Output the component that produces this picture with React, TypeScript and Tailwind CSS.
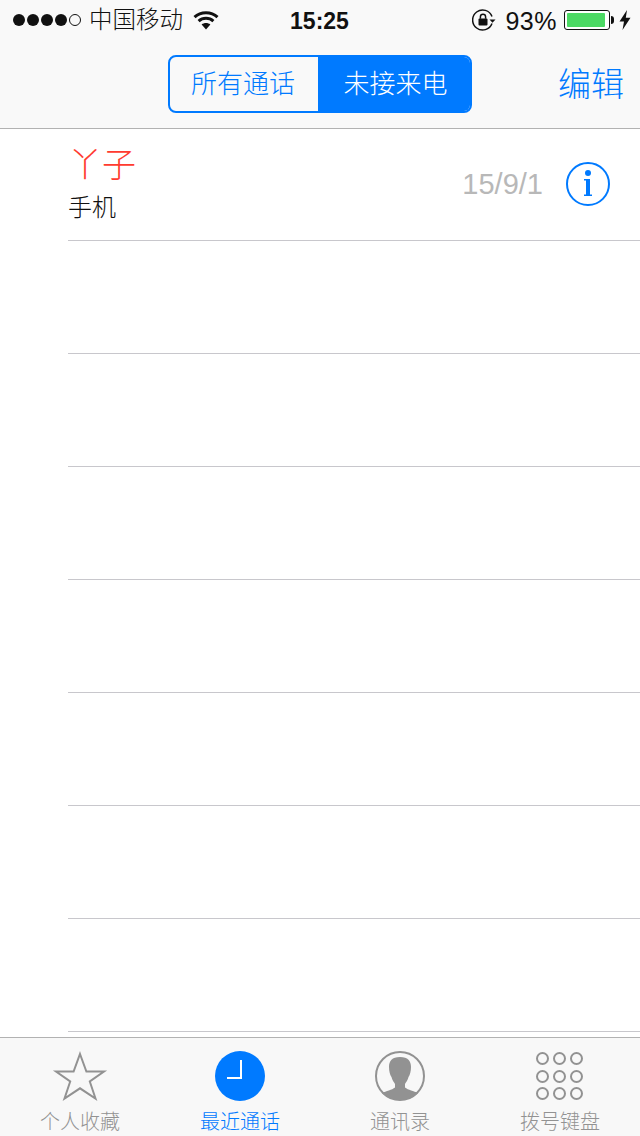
const cjk = "font-['Liberation_Sans','Noto_Sans_CJK_SC',sans-serif]"

const Wifi = () => (
    <svg width="26" height="20" viewBox="0 0 26 20" fill="none" stroke="#111" strokeWidth="3">
        <path d="M1.5 7.2C7.800 1.400 18.200 1.400 24.500 7.200" />
        <path d="M5.600 11.200C9.800 7.400 16.200 7.400 20.400 11.200" />
        <path d="M13 19.500L8.600 14.600C11.200 12.600 14.800 12.600 17.400 14.600Z" fill="#111" stroke="none" />
    </svg>
)

const RotationLock = () => (
    <svg width="24" height="22" viewBox="0 0 24 22" fill="none">
        <path d="M20 14.500A10 10 0 1 1 20 7.500" stroke="#111" strokeWidth="1.500" />
        <path d="M17.500 10.500h6l-3 3.200z" fill="#111" />
        <rect x="6.500" y="9.500" width="9" height="7" rx="1" fill="#111" />
        <path d="M8.400 9.800V7.800a2.600 2.600 0 0 1 5.200 0v2" stroke="#111" strokeWidth="1.500" />
    </svg>
)

const Battery = () => (
    <div className="flex items-center">
        <div className="w-[46px] h-[20px] rounded-[3px] border border-[#111] p-[2px] bg-white">
            <div className="h-full w-[38px] rounded-[1px] bg-[#4cd964]" />
        </div>
        <div className="w-[3px] h-[8px] ml-[1px] rounded-r-full bg-[#111]" />
    </div>
)

const Bolt = () => (
    <svg width="12" height="20" viewBox="0 0 12 20">
        <path d="M8 0L0.500 11.500H5L3.500 20L11.500 7.800H6.800Z" fill="#111" />
    </svg>
)

const StatusBar = () => (
    <div className={`${cjk} grid grid-cols-[1fr_auto_1fr] items-center h-[40px] text-[#111]`}>
        <div className="flex items-center pl-[13px]">
            <div className="flex gap-[2px]">
                <span className="w-3 h-3 rounded-full bg-[#111]" />
                <span className="w-3 h-3 rounded-full bg-[#111]" />
                <span className="w-3 h-3 rounded-full bg-[#111]" />
                <span className="w-3 h-3 rounded-full bg-[#111]" />
                <span className="w-3 h-3 rounded-full border border-[#111]" />
            </div>
            <span className="ml-[8px] mt-[2px] text-[23.5px] font-light leading-none">中国移动</span>
            <span className="ml-[10px]"><Wifi /></span>
        </div>
        <span className="-ml-px mt-[2px] text-[23px] font-bold leading-none">15:25</span>
        <div className="flex items-center justify-end pr-[9px]">
            <RotationLock />
            <span className="ml-[9px] mr-[7px] mt-[2px] text-[25px] tracking-[0.5px] leading-none">93%</span>
            <Battery />
            <span className="ml-[5px]"><Bolt /></span>
        </div>
    </div>
)

const NavBar = () => (
    <div className={`${cjk} grid grid-cols-[1fr_auto_1fr] items-start h-[89px] pt-[15px] border-b border-[#b2b2b2] font-light`}>
        <div />
        <div className="flex w-[304px] h-[58px] rounded-[8px] border-2 border-[#007aff] overflow-hidden text-[26px]">
            <span className="w-[148px] flex items-center justify-center pr-[2px] text-[#007aff]">所有通话</span>
            <span className="flex-1 flex items-center justify-center pl-[3px] text-white bg-[#007aff]">未接来电</span>
        </div>
        <span className="justify-self-end pr-[16px] mt-[13px] text-[33px] leading-none text-[#007aff]">编辑</span>
    </div>
)

const InfoIcon = () => (
    <svg className="-mt-px" width="44" height="44" viewBox="0 0 44 44" fill="#007aff">
        <circle cx="22" cy="22" r="21" fill="none" stroke="#007aff" strokeWidth="2" />
        <circle cx="22" cy="11" r="3" />
        <path d="M18 17H24V32.500H26V34H18V32.500H20V18.500H18Z" />
    </svg>
)

const CallRow = () => (
    <div className={`${cjk} flex items-center h-[112px] ml-[68px] pr-[30px] border-b border-[#c8c7cc]`}>
        <div className="flex flex-col flex-1 -mt-[2px]">
            <span className="text-[34px] leading-[40px] text-[#ff3b30] font-light">丫子</span>
            <span className="mt-[9px] text-[24px] leading-[28px] text-[#111] font-light">手机</span>
        </div>
        <span className="mr-[23px] text-[29px] text-[#b8b8b8]">15/9/1</span>
        <InfoIcon />
    </div>
)

const StarIcon = () => (
    <svg width="56" height="52" viewBox="0 0 56 52" fill="none" stroke="#929292" strokeWidth="2">
        <path d="M28 4L34.400 21.500H52L37.800 31.500L43.500 48.500L28 38.300L12.500 48.500L18.200 31.500L4 21.500H21.600Z" />
    </svg>
)

const ClockIcon = () => (
    <svg width="50" height="50" viewBox="0 0 50 50">
        <circle cx="25" cy="25" r="25" fill="#007aff" />
        <path d="M26 9V27H12" fill="none" stroke="#fff" strokeWidth="2" />
    </svg>
)

const PersonIcon = () => (
    <svg width="50" height="50" viewBox="0 0 50 50">
        <circle cx="25" cy="25" r="24" fill="none" stroke="#929292" strokeWidth="2" />
        <path
            d="M25 6C17 6 14 10 14 16C14 20 15 24 16.500 26C17 29 19 31 20 33V36.500C17 39 11 40 7 42C12 47 18 49 25 49C32 49 38 47 43 42C39 40 33 39 30 36.500V33C31 31 33 29 33.500 26C35 24 36 20 36 16C36 10 33 6 25 6Z"
            fill="#929292"
        />
    </svg>
)

const KeypadIcon = () => (
    <div className="grid grid-cols-3 gap-x-[4px] gap-y-[4.5px] -ml-px">
        {Array.from({ length: 9 }).map((_, i) => (
            <span key={i} className="w-[13px] h-[13px] rounded-full border-2 border-[#929292]" />
        ))}
    </div>
)

const TabItem = ({ icon, label, active }: { icon: React.ReactNode; label: string; active?: boolean }) => (
    <div className="flex flex-col items-center">
        <div className="flex items-center justify-center h-[52px]">{icon}</div>
        <span className={`mt-[8px] text-[20px] leading-[24px] font-light ${active ? "text-[#007aff]" : "text-[#929292]"}`}>
            {label}
        </span>
    </div>
)

const TabBar = () => (
    <div className={`${cjk} grid grid-cols-4 h-[99px] pt-[12px] bg-[#f8f8f8] border-t border-[#b2b2b2]`}>
        <TabItem icon={<StarIcon />} label="个人收藏" />
        <TabItem icon={<ClockIcon />} label="最近通话" active />
        <TabItem icon={<PersonIcon />} label="通讯录" />
        <TabItem icon={<KeypadIcon />} label="拨号键盘" />
    </div>
)

const EmptyRow = () => <div className="h-[113px] ml-[68px] border-b border-[#c8c7cc]" />

export default function App() {
    return (
        <div className="flex flex-col w-[640px] h-[1136px] overflow-hidden bg-white">
            <div className="bg-[#f9f9f9]">
                <StatusBar />
                <NavBar />
            </div>
            <main className="flex-1 overflow-hidden">
                <CallRow />
                <EmptyRow />
                <EmptyRow />
                <EmptyRow />
                <EmptyRow />
                <EmptyRow />
                <EmptyRow />
                <EmptyRow />
            </main>
            <TabBar />
        </div>
    )
}
